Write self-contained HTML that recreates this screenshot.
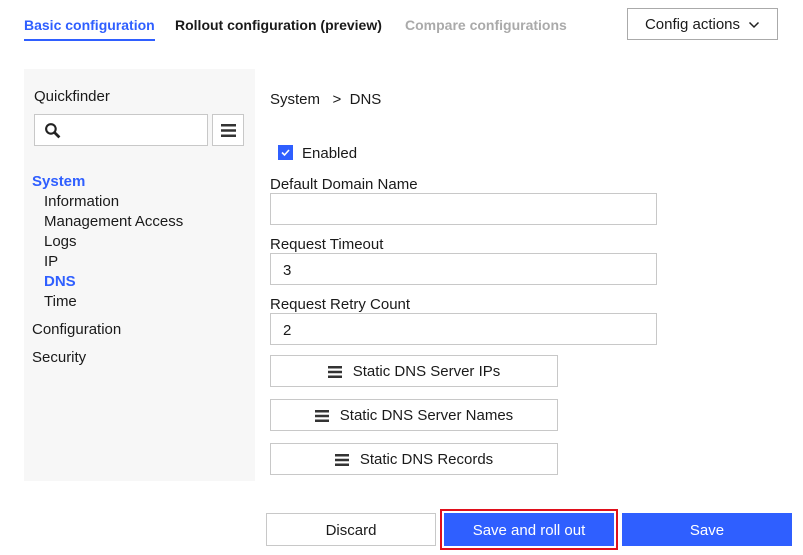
<!DOCTYPE html>
<html><head><meta charset="utf-8"><style>
*{box-sizing:border-box;margin:0;padding:0}
body{width:803px;height:555px;background:#fff;font-family:"Liberation Sans",sans-serif;font-size:15px;color:#1a1a1a;position:relative;overflow:hidden}
.a{position:absolute;white-space:nowrap}
.tab{font-weight:bold;font-size:14px;top:17px}
.box{position:absolute;border:1px solid #c8c8c8;background:#fff}
.btn{position:absolute;border:1px solid #c8c8c8;background:#fff;display:flex;align-items:center;justify-content:center;font-size:15px;padding-top:1px}
.ham{margin-right:11px}
.blue{position:absolute;background:#2f5fff;color:#fff;display:flex;align-items:center;justify-content:center;font-size:15px;padding-top:1px}
</style></head><body>
<div class="a tab" style="left:24px;color:#2f5fff">Basic configuration</div>
<div class="a" style="left:24px;top:39px;width:131px;height:2px;background:#2f5fff"></div>
<div class="a tab" style="left:175px">Rollout configuration (preview)</div>
<div class="a tab" style="left:405px;color:#aaa">Compare configurations</div>
<div class="btn" style="left:627px;top:8px;width:151px;height:32px;border-color:#aaa">Config actions <svg width="12" height="8" style="margin-left:8px" viewBox="0 0 12 8"><path d="M1.5 1.5 6 6 10.5 1.5" fill="none" stroke="#222" stroke-width="1.5"/></svg></div>

<div class="a" style="left:24px;top:69px;width:231px;height:412px;background:#f7f7f7"></div>
<div class="a" style="left:34px;top:88px">Quickfinder</div>
<div class="box" style="left:34px;top:114px;width:174px;height:32px"><svg class="a" style="left:9px;top:7px" width="17" height="17" viewBox="0 0 16 16"><circle cx="6.5" cy="6.5" r="4.5" fill="none" stroke="#222" stroke-width="2"/><path d="M10 10 14.5 14.5" stroke="#222" stroke-width="2.6"/></svg></div>
<div class="btn" style="left:212px;top:114px;width:32px;height:32px"><svg width="15" height="13" viewBox="0 0 15 13"><path d="M0 1.25H15M0 6.5H15M0 11.75H15" stroke="#333" stroke-width="2.5"/></svg></div>
<div class="a" style="left:32px;top:173px;color:#2f5fff;font-weight:bold">System</div>
<div class="a" style="left:44px;top:193px">Information</div>
<div class="a" style="left:44px;top:213px">Management Access</div>
<div class="a" style="left:44px;top:233px">Logs</div>
<div class="a" style="left:44px;top:253px">IP</div>
<div class="a" style="left:44px;top:273px;color:#2f5fff;font-weight:bold">DNS</div>
<div class="a" style="left:44px;top:293px">Time</div>
<div class="a" style="left:32px;top:321px">Configuration</div>
<div class="a" style="left:32px;top:349px">Security</div>

<div class="a" style="left:270px;top:91px">System &nbsp;&nbsp;&gt;&nbsp; DNS</div>
<div class="a" style="left:278px;top:145px;width:15px;height:15px;background:#2f5fff"><svg width="15" height="15" viewBox="0 0 15 15"><path d="M4 7.5 6.5 10 11 5" fill="none" stroke="#fff" stroke-width="1.6"/></svg></div>
<div class="a" style="left:302px;top:145px">Enabled</div>
<div class="a" style="left:270px;top:176px">Default Domain Name</div>
<div class="box" style="left:270px;top:193px;width:387px;height:32px"></div>
<div class="a" style="left:270px;top:236px">Request Timeout</div>
<div class="box" style="left:270px;top:253px;width:387px;height:32px;padding:8px 12px">3</div>
<div class="a" style="left:270px;top:296px">Request Retry Count</div>
<div class="box" style="left:270px;top:313px;width:387px;height:32px;padding:8px 12px">2</div>
<div class="btn" style="left:270px;top:355px;width:288px;height:32px"><svg class="ham" width="14" height="12" viewBox="0 0 14 12"><path d="M0 1.25H14M0 6H14M0 10.75H14" stroke="#333" stroke-width="2.5"/></svg>Static DNS Server IPs</div>
<div class="btn" style="left:270px;top:399px;width:288px;height:32px"><svg class="ham" width="14" height="12" viewBox="0 0 14 12"><path d="M0 1.25H14M0 6H14M0 10.75H14" stroke="#333" stroke-width="2.5"/></svg>Static DNS Server Names</div>
<div class="btn" style="left:270px;top:443px;width:288px;height:32px"><svg class="ham" width="14" height="12" viewBox="0 0 14 12"><path d="M0 1.25H14M0 6H14M0 10.75H14" stroke="#333" stroke-width="2.5"/></svg>Static DNS Records</div>

<div class="btn" style="left:266px;top:513px;width:170px;height:33px">Discard</div>
<div class="a" style="left:440px;top:509px;width:178px;height:41px;border:2px solid #e0101c"></div>
<div class="blue" style="left:444px;top:513px;width:170px;height:33px">Save and roll out</div>
<div class="blue" style="left:622px;top:513px;width:170px;height:33px">Save</div>
</body></html>
